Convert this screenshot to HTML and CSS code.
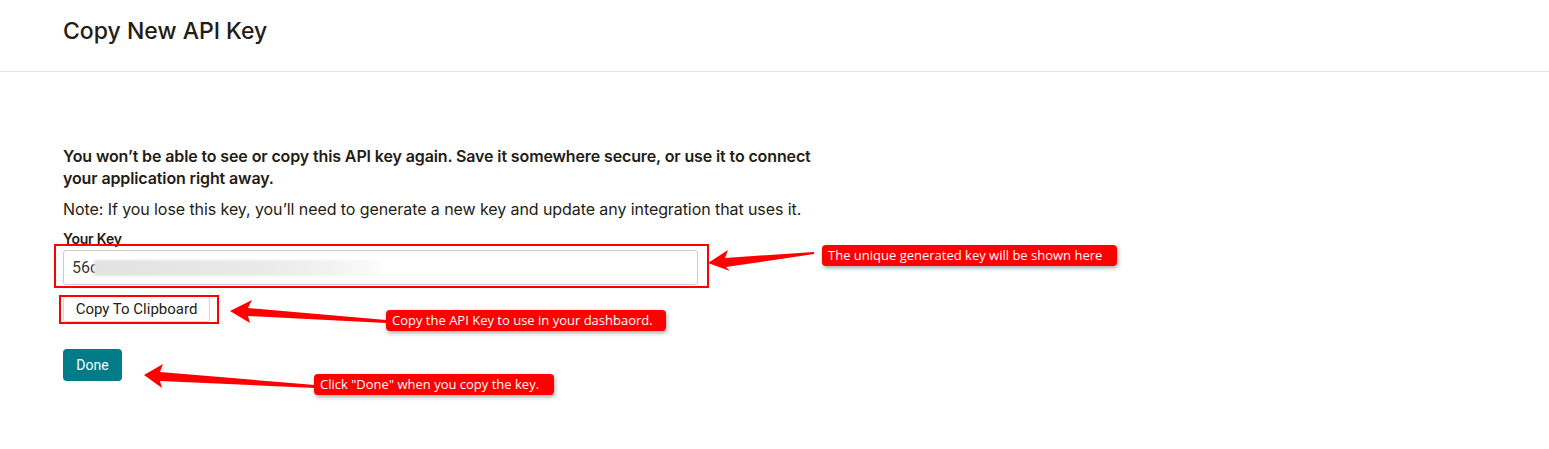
FILE: index.html
```html
<!DOCTYPE html>
<html lang="en">
<head>
<meta charset="utf-8">
<title>Copy New API Key</title>
<link rel="stylesheet" href="styles.css">
</head>
<body>
<div class="page">
  <header class="header">
    <h1 class="title">Copy New API Key</h1>
  </header>
  <main class="content">
    <p class="lead">You won’t be able to see or copy this API key again. Save it somewhere secure, or use it to connect your application right away.</p>
    <p class="note">Note: If you lose this key, you’ll need to generate a new key and update any integration that uses it.</p>
    <label class="label" for="key">Your Key</label>
    <div class="key-input" id="key"><span class="key-start">56c</span><span class="key-blur"></span></div>
    <button class="copy-btn" type="button">Copy To Clipboard</button>
    <button class="done-btn" type="button">Done</button>
  </main>

  <div class="annotations">
    <div class="frame frame-input"></div>
    <div class="frame frame-copy"></div>
    <svg class="arrows" width="1549" height="449" viewBox="0 0 1549 449">
      <polygon fill="#ff0000" points="708,263 728,250 725,258 814,252 814,254 726,267 730,271"/>
      <polygon fill="#ff0000" points="230,311 252,300 248,308 386,320 386,323 248,316 250,323"/>
      <polygon fill="#ff0000" points="144,375 163,364 160,372 315,385 315,388 160,381 162,388"/>
    </svg>
    <div class="tag tag-1">The unique generated key will be shown here</div>
    <div class="tag tag-2">Copy the API Key to use in your dashbaord.</div>
    <div class="tag tag-3">Click "Done" when you copy the key.</div>
  </div>
</div>
</body>
</html>
```
FILE: styles.css
```css
* { box-sizing: border-box; }
html, body { margin: 0; padding: 0; background: #fff; }
body { font-family: Inter, "Liberation Sans", sans-serif; color: #241c15; }

.page { position: relative; width: 1549px; height: 449px; overflow: hidden; }

.header {
  height: 72px;
  border-bottom: 1px solid #e3e3e3;
  padding: 17px 0 0 63px;
}
.title {
  margin: 0;
  font-family: Inter, "Liberation Sans", sans-serif;
  font-weight: 500;
  font-size: 23px;
  line-height: 28px;
  color: #241c15;
}

.content {
  padding: 73px 0 0 63px;
  display: flex;
  flex-direction: column;
  align-items: flex-start;
}
.lead {
  margin: 0;
  width: 770px;
  font-size: 16px;
  font-weight: 600;
  line-height: 22px;
  letter-spacing: -0.12px;
}
.note {
  margin: 9px 0 0;
  font-size: 16px;
  line-height: 22px;
  letter-spacing: -0.08px;
}
.label {
  margin-top: 10px;
  font-size: 14px;
  font-weight: 600;
  line-height: 18px;
  letter-spacing: -0.2px;
}
.key-input {
  margin-top: 2px;
  width: 635px;
  height: 35px;
  border: 1px solid #c7cdd1;
  border-radius: 3px;
  display: flex;
  align-items: center;
  padding-left: 8px;
  font-family: Roboto, "Liberation Sans", sans-serif;
  font-size: 16px;
  color: #3b3b3b;
}
.key-start { white-space: nowrap; }
.key-blur {
  width: 287px;
  height: 16px;
  margin-left: -4px;
  background: linear-gradient(90deg, #e2e2e2 0%, #e9e9e9 55%, #f3f3f3 85%, #fdfdfd 100%);
  filter: blur(1px);
}
.copy-btn {
  margin-top: 11px;
  height: 26px;
  width: 147px;
  padding: 0;
  background: #fff;
  border: 1px solid #d5d5d5;
  border-radius: 3px;
  font-family: Roboto, "Liberation Sans", sans-serif;
  font-size: 15px;
  color: #241c15;
}
.done-btn {
  margin-top: 27px;
  height: 32px;
  width: 59px;
  background: #007c89;
  color: #fff;
  border: 0;
  border-radius: 4px;
  font-family: Roboto, "Liberation Sans", sans-serif;
  font-size: 14px;
}

.annotations { position: absolute; inset: 0; pointer-events: none; }
.arrows { position: absolute; left: 0; top: 0; }
.frame { position: absolute; border: 2px solid #ff0000; }
.frame-input { left: 54px; top: 244px; width: 655px; height: 44px; }
.frame-copy { left: 59px; top: 295px; width: 160px; height: 29px; }
.tag {
  position: absolute;
  background: #ff0000;
  color: #fff;
  font-family: "Open Sans", sans-serif;
  font-size: 13px;
  line-height: 21px;
  height: 21px;
  padding: 0 6px;
  border-radius: 4px;
  box-shadow: 1px 2px 4px rgba(0,0,0,0.35);
  white-space: nowrap;
}
.tag-1 { left: 822px; top: 245px; width: 295px; }
.tag-2 { left: 386px; top: 310px; width: 280px; }
.tag-3 { left: 314px; top: 374px; width: 240px; }
```
